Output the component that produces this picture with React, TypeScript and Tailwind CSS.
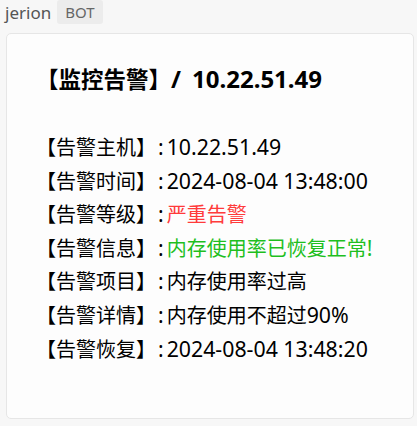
import { Fragment } from "react";

// Latin runs are drawn a touch larger, like the reference font's wider digits
function Mixed({ text, latin }: { text: string; latin: string }) {
  const parts = text.split(/([\x20-\x7e]+)/).filter(Boolean);
  return (
    <>
      {parts.map((p, i) =>
        /^[\x20-\x7e]+$/.test(p) ? (
          <span key={i} className={latin}>
            {p}
          </span>
        ) : (
          <Fragment key={i}>{p}</Fragment>
        )
      )}
    </>
  );
}

export default function App() {
  const rows: { label: string; value: string; color?: string }[] = [
    { label: "【告警主机】", value: "10.22.51.49" },
    { label: "【告警时间】", value: "2024-08-04 13:48:00" },
    { label: "【告警等级】", value: "严重告警", color: "text-[#ff3b3b]" },
    { label: "【告警信息】", value: "内存使用率已恢复正常!", color: "text-[#1fbf1f]" },
    { label: "【告警项目】", value: "内存使用率过高" },
    { label: "【告警详情】", value: "内存使用不超过90%" },
    { label: "【告警恢复】", value: "2024-08-04 13:48:20" },
  ];

  return (
    <div
      className="w-[417px] h-[426px] bg-[#f7f7f7] overflow-hidden"
      style={{ fontFamily: '"Noto Sans", "Noto Sans CJK SC", sans-serif' }}
    >
      {/* Sender line */}
      <div className="flex items-center h-[26px] pl-[5px]">
        <span className="text-[17px] text-[#555]">jerion</span>
        <span className="ml-[6px] px-[8px] h-[24px] -mt-[2px] flex items-center bg-[#ececec] rounded-[3px] text-[15px] text-[#666]">
          BOT
        </span>
      </div>

      {/* Message card */}
      <div className="mt-[7px] ml-[6px] w-[408px] h-[386px] bg-[#fdfdfd] border border-[#e6e6e6] rounded-[5px] pl-[29px] pt-[28px]">
        <h1 className="text-[22.5px] font-bold text-black leading-[34px] whitespace-nowrap">
          【监控告警】
          <span className="text-[24px]">/</span>
          <span className="text-[24px] ml-[11px]">10.22.51.49</span>
        </h1>
        <div className="mt-[33px] flex flex-col">
          {rows.map((r) => (
            <div key={r.label} className="text-[20px] leading-[33px] text-black whitespace-nowrap">
              {r.label}
              <span className="text-[21px] ml-[2px] mr-[3px]">:</span>
              <span className={r.color}>
                <Mixed text={r.value} latin="text-[21.3px]" />
              </span>
            </div>
          ))}
        </div>
      </div>
    </div>
  );
}
